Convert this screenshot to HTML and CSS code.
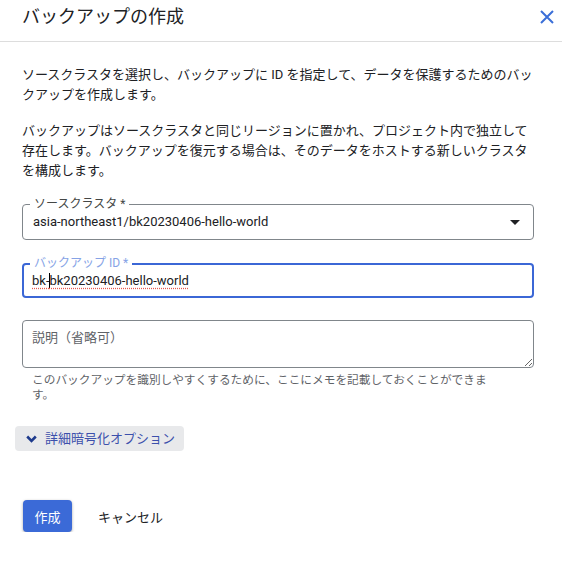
FILE: index.html
```html
<!DOCTYPE html>
<html lang="ja">
<head>
<meta charset="utf-8">
<title>バックアップの作成</title>
<link rel="stylesheet" href="styles.css">
</head>
<body>
<div class="dialog">
  <header class="dlg-header">
    <h1 class="dlg-title">バックアップの作成</h1>
    <button class="close-btn" aria-label="閉じる">
      <svg width="24" height="24" viewBox="0 0 24 24" aria-hidden="true"><path d="M6 6 L18 18 M18 6 L6 18" stroke="currentColor" stroke-width="2" fill="none"/></svg>
    </button>
  </header>
  <div class="dlg-body">
    <p class="desc">ソースクラスタを選択し、バックアップに ID を指定して、データを保護するためのバックアップを作成します。</p>
    <p class="desc desc-last">バックアップはソースクラスタと同じリージョンに置かれ、プロジェクト内で独立して存在します。バックアップを復元する場合は、そのデータをホストする新しいクラスタを構成します。</p>

    <div class="field field-select">
      <span class="field-label">ソースクラスタ *</span>
      <span class="field-value">asia-northeast1/bk20230406-hello-world</span>
      <span class="select-arrow"></span>
    </div>

    <div class="field field-focused">
      <span class="field-label label-focused">バックアップ ID *</span>
      <span class="field-value"><span class="spell">bk-<span class="caret"></span>bk20230406-hello-world</span></span>
    </div>

    <textarea class="field-textarea" placeholder="説明（省略可）"></textarea>
    <p class="hint">このバックアップを識別しやすくするために、ここにメモを記載しておくことができます。</p>

    <button class="expand-btn">
      <svg width="11" height="8" viewBox="0 0 11 8" aria-hidden="true"><path d="M1.2 1.5 L5.5 5.8 L9.8 1.5" stroke="currentColor" stroke-width="2.6" fill="none"/></svg>
      <span>詳細暗号化オプション</span>
    </button>

    <div class="actions">
      <button class="btn-primary">作成</button>
      <button class="btn-text">キャンセル</button>
    </div>
  </div>
</div>
</body>
</html>
```
FILE: styles.css
```css
* { box-sizing: border-box; }

body {
  margin: 0;
  background: #fff;
  color: #202124;
  font-family: Roboto, "Noto Sans CJK JP", sans-serif;
}

.dlg-header {
  display: flex;
  justify-content: space-between;
  align-items: flex-start;
  height: 42px;
  border-bottom: 1px solid #dddddd;
  padding: 0 3px 0 22px;
}

.dlg-title {
  margin: 0;
  padding-top: 5px;
  font-size: 18px;
  font-weight: 400;
  line-height: 24px;
  color: #202124;
}

.close-btn {
  margin-top: 5px;
  padding: 0;
  border: 0;
  background: none;
  color: #3b6fd8;
  width: 24px;
  height: 24px;
  display: flex;
}

.dlg-body {
  padding: 23px 22px 0;
}

.desc {
  margin: 0 0 16px;
  font-size: 13px;
  line-height: 20px;
  color: #202124;
}

.desc-last {
  margin-bottom: 23px;
}

.field {
  position: relative;
  display: flex;
  align-items: center;
  width: 512px;
  height: 36px;
  border: 1px solid #80868b;
  border-radius: 4px;
  padding: 0 13px 0 10px;
  margin-bottom: 23px;
}

.field-label {
  position: absolute;
  top: -9px;
  left: 7px;
  padding: 0 4px;
  background: #fff;
  font-size: 12px;
  line-height: 16px;
  color: #444746;
}

.field-value {
  flex: 1;
  font-size: 13px;
  line-height: 18px;
  color: #202124;
}

.select-arrow {
  width: 0;
  height: 0;
  border-left: 5px solid transparent;
  border-right: 5px solid transparent;
  border-top: 5px solid #202124;
}

.field-focused {
  height: 35px;
  border: 2px solid #3b67d6;
  padding-left: 8px;
  margin-bottom: 22px;
}

.label-focused {
  top: -10px;
  left: 6px;
  color: #86a3e6;
}

.spell {
  text-decoration: underline dotted #e8594f;
  text-underline-offset: 3px;
}

.caret {
  display: inline-block;
  width: 0;
  height: 15px;
  border-left: 1px solid #000;
  vertical-align: -3px;
  margin-right: -1px;
}

.field-textarea {
  display: block;
  width: 512px;
  height: 48px;
  border: 1px solid #80868b;
  border-radius: 4px;
  padding: 9px 9px;
  font-family: Roboto, "Noto Sans CJK JP", sans-serif;
  font-size: 13px;
  line-height: 16px;
  color: #202124;
  margin: 0;
}

.field-textarea::placeholder {
  color: #5f6368;
}

.hint {
  margin: 5px 0 0;
  padding: 0 30px 0 10px;
  width: 512px;
  font-size: 11.7px;
  line-height: 15px;
  color: #5f6368;
}

.expand-btn {
  display: inline-flex;
  align-items: center;
  gap: 8px;
  margin: 23px 0 0 -7px;
  height: 25px;
  padding: 0 9px 0 11px;
  border: 0;
  border-radius: 4px;
  background: #e8e9eb;
  color: #3c50ac;
  font-family: Roboto, "Noto Sans CJK JP", sans-serif;
  font-size: 13px;
  line-height: 18px;
}

.expand-btn svg {
  color: #1d3a8c;
}

.actions {
  display: flex;
  align-items: center;
  gap: 10px;
  margin-top: 49px;
}

.btn-primary {
  height: 32px;
  padding: 0 11.5px;
  margin-left: 1px;
  border: 0;
  border-radius: 4px;
  background: #3b6ad7;
  color: #fff;
  font-family: Roboto, "Noto Sans CJK JP", sans-serif;
  font-size: 13px;
  box-shadow: 0 1px 3px rgba(0, 0, 0, 0.35);
}

.btn-text {
  height: 32px;
  padding: 0 16px;
  border: 0;
  background: none;
  color: #202124;
  font-family: Roboto, "Noto Sans CJK JP", sans-serif;
  font-size: 13px;
}
```
